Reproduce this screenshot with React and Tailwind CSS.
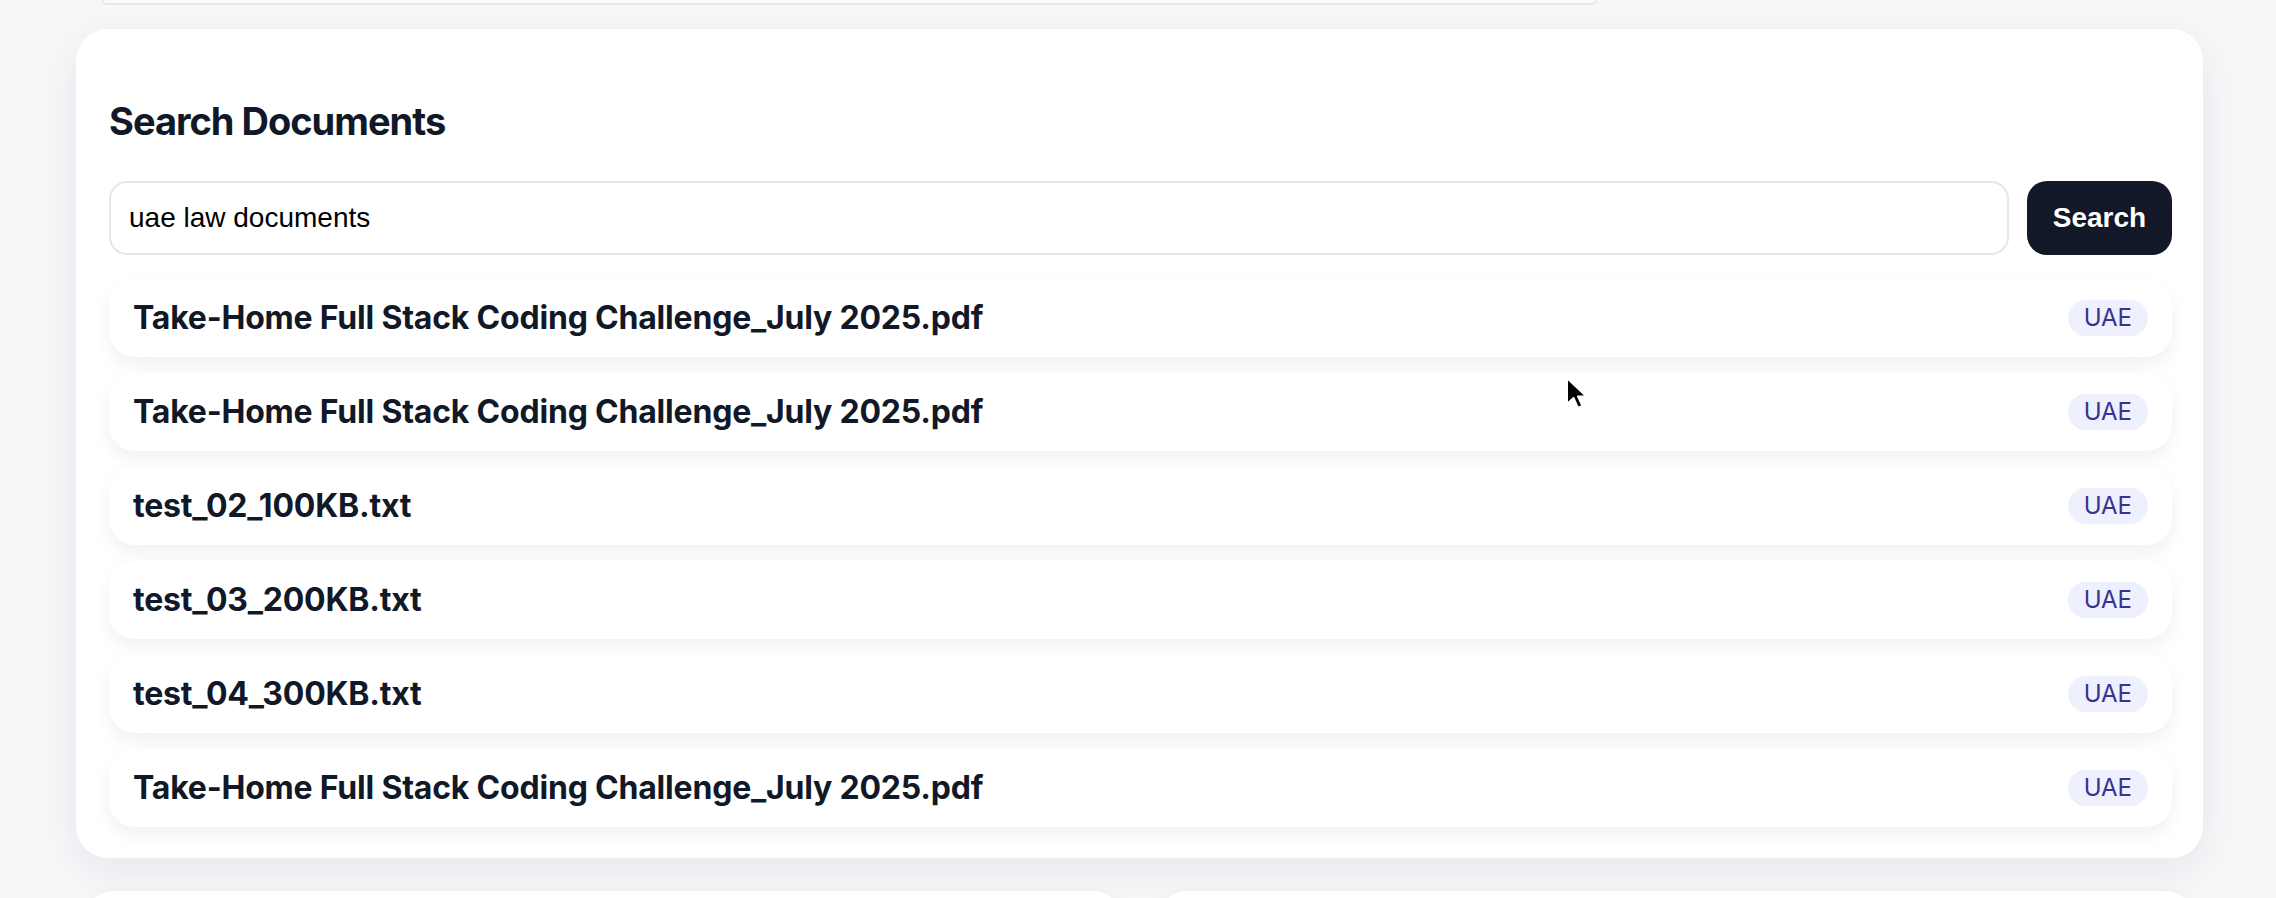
import React from 'react';

const documents = [
  { name: 'Take-Home Full Stack Coding Challenge_July 2025.pdf', region: 'UAE' },
  { name: 'Take-Home Full Stack Coding Challenge_July 2025.pdf', region: 'UAE' },
  { name: 'test_02_100KB.txt', region: 'UAE' },
  { name: 'test_03_200KB.txt', region: 'UAE' },
  { name: 'test_04_300KB.txt', region: 'UAE' },
  { name: 'Take-Home Full Stack Coding Challenge_July 2025.pdf', region: 'UAE' },
];

function ResultRow({ doc }) {
  return (
    <div className="flex h-[78px] items-center justify-between rounded-[26px] bg-white pl-[24px] pr-[24px] shadow-[0_8px_18px_rgba(0,0,0,0.06)]">
      <h3 className="text-[32px] font-bold leading-[40px] tracking-[-0.2px] text-[#111827]">{doc.name}</h3>
      <span className="flex h-[36px] items-center rounded-full bg-[#eef0fd] px-[16px] text-[24px] leading-none text-[#37338f]">
        {doc.region}
      </span>
    </div>
  );
}

export default function App() {
  return (
    <div className="relative h-[898px] w-[2276px] overflow-hidden bg-[#f6f7f9] font-['Inter',sans-serif]">
      {/* bottom edge of the card above */}
      <div className="pl-[102px]">
        <div className="h-[5px] w-[1495px] rounded-b-[20px] border-x-2 border-b-2 border-[#e7e7e7] bg-[#fafafa]" />
      </div>

      {/* Search card */}
      <section className="ml-[76px] mt-[24px] w-[2127px] rounded-[32px] bg-white pb-[31px] pl-[33px] pr-[31px] pt-[64px] shadow-[0_12px_40px_rgba(15,23,42,0.07)]">
        <h2 className="text-[38px] font-bold leading-[56px] tracking-[-1px] text-[#111827]">Search Documents</h2>

        <div className="mt-[32px] flex gap-[18px]">
          <input
            type="text"
            defaultValue="uae law documents"
            className="h-[74px] flex-1 rounded-[18px] border-2 border-[#e5e7eb] bg-white px-[18px] font-['Liberation_Sans',Arial,sans-serif] text-[28px] text-black outline-none"
          />
          <button className="h-[74px] w-[145px] rounded-[20px] bg-[#121827] font-['Liberation_Sans',Arial,sans-serif] text-[28px] font-bold text-white">
            Search
          </button>
        </div>

        <div className="mt-[24px] flex flex-col gap-[16px]">
          {documents.map((doc, index) => (
            <ResultRow key={index} doc={doc} />
          ))}
        </div>
      </section>

      {/* cards below */}
      <div className="ml-[84px] mt-[33px] grid w-[2111px] grid-cols-2 gap-[36px]">
        <div className="h-[60px] rounded-[32px] bg-white shadow-[0_4px_20px_rgba(15,23,42,0.05)]" />
        <div className="h-[60px] rounded-[32px] bg-white shadow-[0_4px_20px_rgba(15,23,42,0.05)]" />
      </div>

      {/* mouse pointer */}
      <svg className="absolute left-[1565px] top-[376px]" width="24" height="36" viewBox="0 0 24 36">
        <path
          d="M2 2 L2 28 L8.5 22 L13 32 L17.5 30 L13 20.5 L21.5 20.5 Z"
          fill="#000"
          stroke="#fff"
          strokeWidth="2"
          strokeLinejoin="round"
        />
      </svg>
    </div>
  );
}
